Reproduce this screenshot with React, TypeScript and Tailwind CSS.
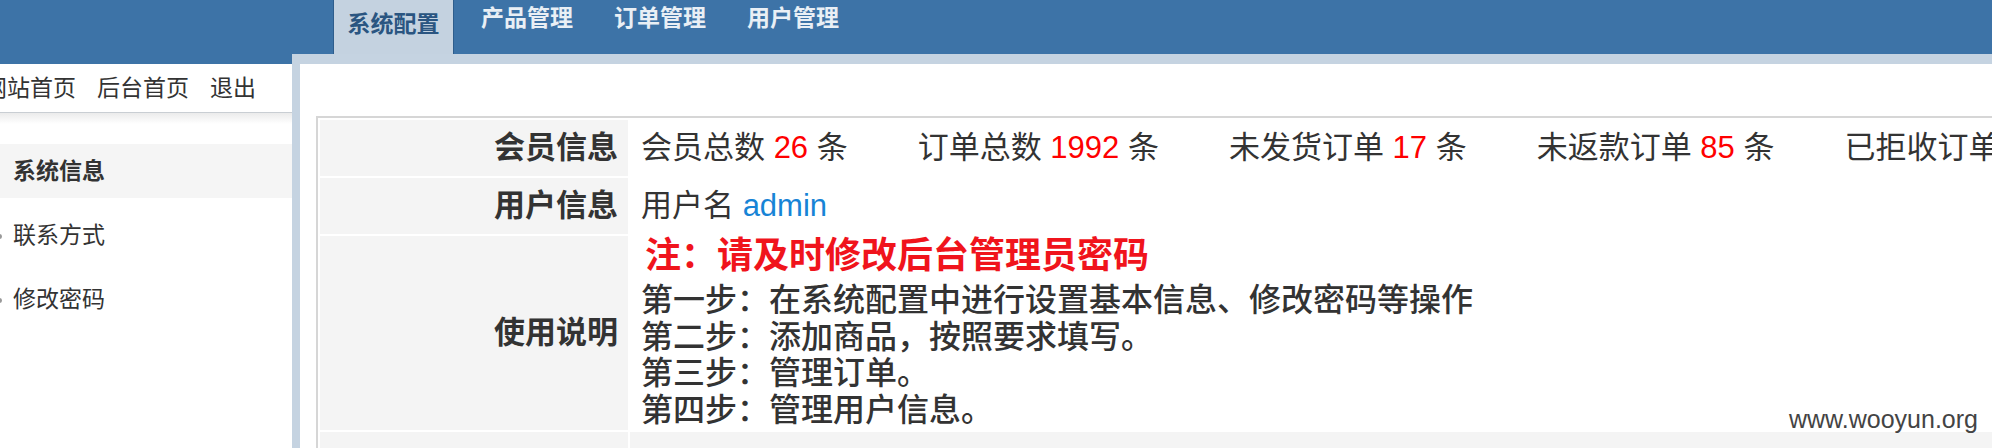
const tabs = ["系统配置", "产品管理", "订单管理", "用户管理"];

const menu = [
  { label: "系统信息", active: true },
  { label: "联系方式", active: false },
  { label: "修改密码", active: false },
];

const stats = [
  { label: "会员总数", value: "26" },
  { label: "订单总数", value: "1992" },
  { label: "未发货订单", value: "17" },
  { label: "未返款订单", value: "85" },
  { label: "已拒收订单", value: "3" },
];

const steps = [
  "第一步：在系统配置中进行设置基本信息、修改密码等操作",
  "第二步：添加商品，按照要求填写。",
  "第三步：管理订单。",
  "第四步：管理用户信息。",
];

function TopNav() {
  return (
    <div className="flex h-[54px] gap-[13px] bg-[#3d73a7] pl-[333px]">
      {tabs.map((tab, i) =>
        i === 0 ? (
          <div
            key={tab}
            className="h-[54px] w-[121px] border-x border-[#2e5d8c] bg-[#c4d2e0] pt-[12px] text-center text-[23px] leading-[24px] font-bold text-[#2a5581]"
          >
            {tab}
          </div>
        ) : (
          <div
            key={tab}
            className="h-[54px] w-[120px] pt-[6px] text-center text-[23px] leading-[24px] font-bold text-[#e9eff5]"
          >
            {tab}
          </div>
        )
      )}
    </div>
  );
}

function Sidebar() {
  return (
    <div className="w-[292px] flex-none bg-white">
      <div className="h-[10px] bg-[#3d73a7]" />
      <div className="flex h-[49px] items-center gap-[21px] border-b border-[#c9ced3] -ml-[16px] text-[23px] leading-none whitespace-nowrap text-[#333]">
        <span>网站首页</span>
        <span>后台首页</span>
        <span>退出</span>
      </div>
      <div className="h-[11px] bg-linear-to-b from-[#ebebeb] to-white" />
      <ul className="mt-[20px] flex flex-col gap-[10px]">
        {menu.map((item) => (
          <li
            key={item.label}
            className={
              item.active
                ? "flex h-[54px] items-center bg-[#f5f5f5] pl-[13px] text-[23px] font-bold text-[#333]"
                : "relative flex h-[54px] items-center pl-[13px] text-[23px] text-[#333]"
            }
          >
            {!item.active && (
              <span className="absolute -left-[3px] top-[26px] h-[5px] w-[5px] rounded-full bg-[#999]" />
            )}
            {item.label}
          </li>
        ))}
      </ul>
    </div>
  );
}

function InfoTable() {
  const label =
    "bg-[#f4f4f4] pr-[10px] text-right align-middle text-[31px] font-bold text-[#333] whitespace-nowrap";
  return (
    <table className="w-[2000px] table-fixed border-separate border-spacing-[2px] border-2 border-[#d6d6d6]">
      <colgroup>
        <col className="w-[308px]" />
        <col />
      </colgroup>
      <tbody>
        <tr className="h-[56px]">
          <td className={label}>会员信息</td>
          <td className="pl-[11px] align-middle text-[31px] whitespace-nowrap text-[#333]">
            {stats.map((s) => (
              <span key={s.label} className="mr-[70px]">
                {s.label} <span className="text-[#ff0000]">{s.value}</span> 条
              </span>
            ))}
          </td>
        </tr>
        <tr className="h-[56px]">
          <td className={label}>用户信息</td>
          <td className="pl-[11px] align-middle text-[31px] text-[#333]">
            用户名 <span className="text-[#1784d6]">admin</span>
          </td>
        </tr>
        <tr className="h-[194px]">
          <td className={label}>使用说明</td>
          <td className="pl-[11px] pt-[1px] pb-[2px] align-middle whitespace-nowrap">
            <div className="h-[45px] pl-[4px] text-[36px] leading-[38px] font-bold text-[#f0141c]">
              注：请及时修改后台管理员密码
            </div>
            {steps.map((s) => (
              <div key={s} className="text-[32px] leading-[36.5px] font-medium text-[#333]">
                {s}
              </div>
            ))}
          </td>
        </tr>
        <tr className="h-[30px]">
          <td className="bg-[#f4f4f4]" />
          <td className="bg-[#f4f4f4]" />
        </tr>
      </tbody>
    </table>
  );
}

export default function App() {
  return (
    <div className="relative h-[448px] w-[1992px] overflow-hidden bg-white font-['Liberation_Sans','Noto_Sans_CJK_SC',sans-serif]">
      <TopNav />
      <div className="flex h-[394px]">
        <Sidebar />
        <div className="min-w-0 flex-1 bg-[#c5d3e1] pt-[10px] pl-[8px]">
          <div className="h-full overflow-hidden bg-white pt-[52px] pl-[16px]">
            <InfoTable />
          </div>
        </div>
      </div>
      <div className="absolute left-[1789px] top-[406px] text-[25px] leading-[26px] text-[#444]">
        www.wooyun.org
      </div>
    </div>
  );
}
